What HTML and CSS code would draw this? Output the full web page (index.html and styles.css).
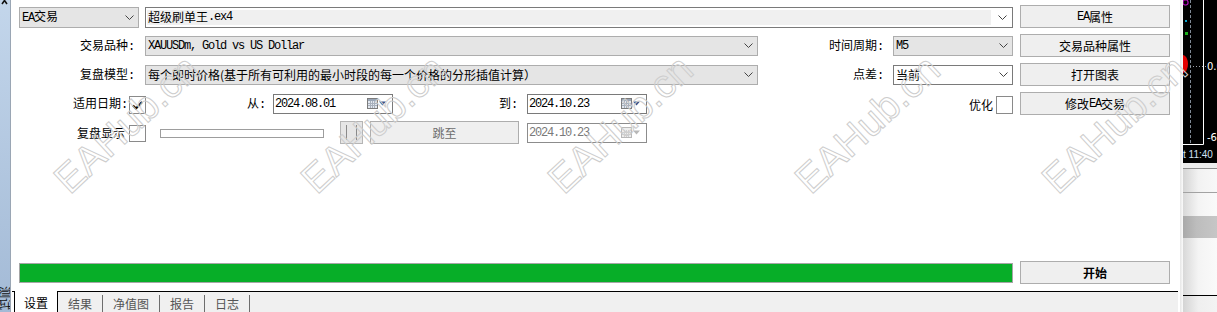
FILE: index.html
```html
<!DOCTYPE html>
<html lang="zh-CN">
<head>
<meta charset="utf-8">
<title>策略测试</title>
<link rel="stylesheet" href="styles.css">
</head>
<body>
<div class="app">
  <aside class="dock">
    <div class="dock-bar">
      <svg class="dock-x" width="10" height="5" viewBox="0 0 10 5"><path d="M2 -3 L7 4 M7 -3 L2 4" stroke="#111" stroke-width="1.6" fill="none"/></svg>
      <span class="dock-label">测试器</span>
    </div>
  </aside>

  <main class="tester">
    <section class="panel">
      <div class="row">
        <div class="combo gray ea"><span class="val"><span class="m">EA</span>交易</span><svg class="chev" width="9" height="5" viewBox="0 0 9 5"><path d="M0.5 0.5 L4.5 4.5 L8.5 0.5" fill="none" stroke="#444"/></svg></div>
        <div class="combo file"><div class="field">超级刷单王<span class="m">.ex4</span></div><svg class="chev" width="9" height="5" viewBox="0 0 9 5"><path d="M0.5 0.5 L4.5 4.5 L8.5 0.5" fill="none" stroke="#444"/></svg></div>
        <button class="btn"><span class="m">EA</span>属性</button>
      </div>

      <div class="row">
        <label class="lbl">交易品种<span class="m">:</span></label>
        <div class="combo gray wide"><span class="val m">XAUUSDm, Gold vs US Dollar</span><svg class="chev" width="9" height="5" viewBox="0 0 9 5"><path d="M0.5 0.5 L4.5 4.5 L8.5 0.5" fill="none" stroke="#444"/></svg></div>
        <label class="lbl2">时间周期<span class="m">:</span></label>
        <div class="combo gray small"><span class="val m">M5</span><svg class="chev" width="9" height="5" viewBox="0 0 9 5"><path d="M0.5 0.5 L4.5 4.5 L8.5 0.5" fill="none" stroke="#444"/></svg></div>
        <button class="btn">交易品种属性</button>
      </div>

      <div class="row">
        <label class="lbl">复盘模型<span class="m">:</span></label>
        <div class="combo gray wide"><span class="val">每个即时价格(基于所有可利用的最小时段的每一个价格的分形插值计算）</span><svg class="chev" width="9" height="5" viewBox="0 0 9 5"><path d="M0.5 0.5 L4.5 4.5 L8.5 0.5" fill="none" stroke="#444"/></svg></div>
        <label class="lbl2">点差<span class="m">:</span></label>
        <div class="combo white small"><span class="val">当前</span><svg class="chev" width="9" height="5" viewBox="0 0 9 5"><path d="M0.5 0.5 L4.5 4.5 L8.5 0.5" fill="none" stroke="#444"/></svg></div>
        <button class="btn">打开图表</button>
      </div>

      <div class="row">
        <label class="lbl date-lbl">适用日期<span class="m">:</span></label>
        <span class="check"><svg width="11" height="9" viewBox="0 0 11 9"><path d="M1 4.5 L4 7.5 L10 1" fill="none" stroke="#000" stroke-width="2"/></svg></span>
        <label class="from-lbl">从<span class="m">:</span></label>
        <div class="date"><span class="val m">2024.08.01</span><svg class="cal" width="20" height="11" viewBox="0 0 20 11"><rect x="0.5" y="0.5" width="10" height="10" fill="#e3e8ef" stroke="#7c7c7c"/><rect x="1" y="1" width="9" height="2" fill="#9aa6b6"/><path d="M3.5 3 V10 M5.5 3 V10 M7.5 3 V10 M1 5.5 H10 M1 7.5 H10" stroke="#a8b0bc"/><path d="M12 3.5 H19 L15.5 7.5 Z" fill="#33548c"/></svg></div>
        <label class="to-lbl">到<span class="m">:</span></label>
        <div class="date"><span class="val m">2024.10.23</span><svg class="cal" width="20" height="11" viewBox="0 0 20 11"><rect x="0.5" y="0.5" width="10" height="10" fill="#e3e8ef" stroke="#7c7c7c"/><rect x="1" y="1" width="9" height="2" fill="#9aa6b6"/><path d="M3.5 3 V10 M5.5 3 V10 M7.5 3 V10 M1 5.5 H10 M1 7.5 H10" stroke="#a8b0bc"/><path d="M12 3.5 H19 L15.5 7.5 Z" fill="#33548c"/></svg></div>
        <label class="opt-lbl">优化</label>
        <span class="check"></span>
        <button class="btn">修改<span class="m">EA</span>交易</button>
      </div>

      <div class="row">
        <label class="lbl show-lbl">复盘显示</label>
        <span class="check"></span>
        <div class="slider"></div>
        <button class="btn pause" disabled><svg width="13" height="15" viewBox="0 0 13 15"><path d="M1.5 0 V15 M11.5 0 V15" stroke="#8a8a8a"/></svg></button>
        <button class="btn jump" disabled>跳至</button>
        <div class="date off"><span class="val m">2024.10.23</span><svg class="cal" width="20" height="11" viewBox="0 0 20 11"><rect x="0.5" y="0.5" width="10" height="10" fill="#eeeeee" stroke="#b8b8b8"/><path d="M3.5 3 V10 M5.5 3 V10 M7.5 3 V10 M1 5.5 H10 M1 7.5 H10" stroke="#d0d0d0"/><path d="M12 3.5 H19 L15.5 7.5 Z" fill="#b8b8b8"/></svg></div>
      </div>

      <div class="row progress-row">
        <div class="progress"><div class="fill"></div></div>
        <button class="btn start">开始</button>
      </div>

      <div class="wm-layer" aria-hidden="true">
        <span class="wm">EAHub.cn</span>
        <span class="wm">EAHub.cn</span>
        <span class="wm">EAHub.cn</span>
        <span class="wm">EAHub.cn</span>
        <span class="wm">EAHub.cn</span>
      </div>
    </section>

    <nav class="tabs">
      <span class="tab on">设置</span>
      <span class="tab">结果</span>
      <span class="tab">净值图</span>
      <span class="tab">报告</span>
      <span class="tab">日志</span>
    </nav>
  </main>

  <aside class="side">
    <div class="side-edge"></div>
    <div class="side-main">
      <svg class="chart" width="34" height="163" viewBox="0 0 34 163">
        <rect width="34" height="163" fill="#000"/>
        <path d="M7.5 0 V144" stroke="#7f8a96" stroke-dasharray="3 2"/>
        <path d="M20.5 0 V144.5 H0" stroke="#fff" fill="none"/>
        <path d="M7 66.5 H23" stroke="#9aa0a8" stroke-dasharray="1 2"/>
        <rect x="0" y="0" width="5" height="5" fill="none" stroke="#c010c8" stroke-width="1.2" rx="2"/>
        <rect x="2" y="20" width="2" height="2" fill="#0aa0c8"/>
        <rect x="2" y="32" width="3" height="3" fill="#19b019"/>
        <ellipse cx="0" cy="64" rx="5" ry="9" fill="#e30000"/>
        <text x="24" y="70" class="ct">0.0</text>
        <text x="24" y="141" class="ct">-60</text>
        <text x="0" y="158" class="ct time">t 11:40</text>
      </svg>
      <div class="s-a"></div>
      <div class="s-b"></div>
      <div class="s-c"></div>
      <div class="s-d"></div>
      <div class="s-e"></div>
      <div class="s-f"></div>
    </div>
  </aside>
</div>
</body>
</html>
```

FILE: styles.css
```css
* { box-sizing: border-box; }

html, body {
  margin: 0;
  width: 1217px;
  height: 312px;
  overflow: hidden;
  background: #fff;
}

body {
  font-family: "Noto Sans CJK SC", "Liberation Sans", sans-serif;
  font-size: 12px;
  line-height: 16px;
  color: #000;
}

.m {
  font-family: "Liberation Mono", "Noto Sans CJK SC", monospace;
  font-size: 12px;
  letter-spacing: -1.2px;
}

.app {
  display: flex;
  width: 1217px;
  height: 312px;
}

/* left dock */
.dock {
  width: 12px;
  flex: none;
  background: #fff;
}
.dock-bar {
  width: 11px;
  height: 100%;
  background: linear-gradient(#c3d6eb, #a3bad6);
  border-right: 1px solid #9aa6b4;
  display: flex;
  flex-direction: column;
  justify-content: space-between;
  overflow: hidden;
}
.dock-x { display: block; }
.dock-label {
  writing-mode: vertical-rl;
  text-orientation: sideways;
  font-size: 12px;
  line-height: 10px;
  height: 26px;
  overflow: hidden;
  color: #111;
}

/* tester */
.tester {
  width: 1168px;
  flex: none;
  display: flex;
  flex-direction: column;
}

.panel {
  position: relative;
  height: 291px;
  padding: 5px 0 7px 7px;
  display: flex;
  flex-direction: column;
  gap: 6px;
}

.row {
  display: flex;
  align-items: center;
  height: 23px;
  width: 1151px;
  flex: none;
}

.progress-row { margin-top: auto; }

.btn {
  margin: 0 0 0 auto;
  width: 150px;
  height: 23px;
  padding: 0;
  background: #efefef;
  border: 1px solid #adadad;
  font: inherit;
  color: #000;
  display: flex;
  align-items: center;
  justify-content: center;
  flex: none;
}

.combo {
  display: flex;
  align-items: center;
  height: 20px;
  border: 1px solid #adadad;
  flex: none;
  padding-left: 2px;
  padding-right: 4px;
}
.combo .val {
  flex: 1;
  white-space: nowrap;
  overflow: hidden;
}
.combo.gray { background: #e5e5e5; }
.combo.white { background: #fff; border-color: #7a7a7a; }
.combo.ea { width: 120px; height: 21px; margin-top: 1px; }
.combo.wide { width: 613px; }
.combo.small { width: 120px; }
.combo.file {
  margin-left: 6px;
  width: 868px;
  height: 21px;
  margin-top: 1px;
  background: #fff;
  border-color: #7a7a7a;
  padding: 2px 5px 2px 1px;
}
.combo.file .field {
  flex: 1;
  height: 100%;
  background: #f0f0f0;
  margin-right: 7px;
  padding-left: 1px;
  display: flex;
  align-items: center;
}
.chev { flex: none; display: block; }

.lbl {
  width: 126px;
  text-align: right;
  padding-right: 11px;
  flex: none;
}
.lbl2 {
  width: 135px;
  text-align: right;
  padding-right: 10px;
  flex: none;
}
.lbl.date-lbl { width: 110px; padding-right: 2px; }
.lbl.show-lbl { width: 110px; padding-right: 4px; }

.check {
  width: 17px;
  height: 18px;
  border: 1px solid #8a8a8a;
  background: #fff;
  flex: none;
  display: flex;
  align-items: center;
  justify-content: center;
  margin-top: 3px;
}
.show-lbl + .check { height: 17px; margin-top: 2px; }

.from-lbl {
  width: 127px;
  text-align: right;
  padding-right: 8px;
  flex: none;
}
.to-lbl {
  width: 134px;
  text-align: right;
  padding-right: 10px;
  flex: none;
}

.date {
  width: 120px;
  height: 20px;
  border: 1px solid #7a7a7a;
  background: #fff;
  display: flex;
  align-items: center;
  padding: 0 5px 0 1px;
  flex: none;
}
.date .val { flex: 1; white-space: nowrap; }
.date .cal { display: block; flex: none; }
.date.off {
  margin-left: 8px;
  border-color: #8c8c8c;
  color: #7a7a7a;
}

.opt-lbl {
  margin-left: auto;
  padding-right: 3px;
  margin-top: 3px;
}
.opt-lbl + .check + .btn { margin-left: 7px; }

.slider {
  margin-left: 14px;
  width: 164px;
  height: 9px;
  border: 1px solid #9d9d9d;
  background: #fff;
  flex: none;
  margin-top: 2px;
}
.btn.pause {
  margin-left: 16px;
  width: 23px;
  background: #e6e6e6;
  border-color: #b5b5b5;
}
.btn.jump {
  margin-left: 7px;
  width: 149px;
  color: #6d6d6d;
}

.progress {
  width: 994px;
  height: 20px;
  border: 1px solid #a6a6a6;
  flex: none;
  background: #fff;
}
.progress .fill {
  width: 100%;
  height: 100%;
  background: #07ae28;
}
.btn.start { font-weight: bold; }

/* watermark */
.wm-layer {
  position: absolute;
  left: 0;
  top: 0;
  right: 0;
  bottom: 0;
  display: flex;
  gap: 67px;
  padding: 101px 0 0 24px;
  pointer-events: none;
}
.wm {
  flex: none;
  width: 180px;
  height: 46px;
  font-family: "Liberation Sans", sans-serif;
  font-size: 40px;
  line-height: 46px;
  color: transparent;
  -webkit-text-stroke: 1px #cdcdcd;
  transform: rotate(-43deg);
  white-space: nowrap;
}

/* bottom tabs */
.tabs {
  height: 21px;
  flex: none;
  border-top: 1px solid #000;
  background: linear-gradient(to right, #fff 2px, #f0f0f0 2px);
  display: flex;
  align-items: flex-end;
  padding-left: 2px;
  margin-right: 2px;
}
.tab {
  height: 17px;
  line-height: 17px;
  padding: 0 10px;
  border-right: 1px solid #6d6d6d;
  color: #555;
}
.tab.on {
  align-self: stretch;
  height: 21px;
  margin-top: -1px;
  padding: 3px 9px 0;
  background: #fff;
  border-left: 1px solid #000;
  border-right: 1px solid #000;
  color: #000;
}

/* right side */
.side {
  width: 37px;
  flex: none;
  display: flex;
}
.side-edge {
  width: 3px;
  background: linear-gradient(to right, #e6e6e6, #fbfbfb);
}
.side-main {
  width: 34px;
  display: flex;
  flex-direction: column;
}
.chart { display: block; flex: none; }
.ct {
  font-family: "DejaVu Sans", "Liberation Sans", sans-serif;
  font-size: 10px;
  fill: #fff;
}
.ct.time {
  font-family: "Liberation Sans", sans-serif;
  fill: #cfe0f4;
  font-size: 10px;
}
.s-a {
  height: 6px;
  background: #ececec;
  border-bottom: 1px solid #8c8c8c;
}
.s-b {
  height: 24px;
  background: linear-gradient(to right, #d4d4d4, #f2f2f2 45%, #f8f8f8);
  border-bottom: 1px solid #a2a2a2;
}
.s-c {
  height: 23px;
  background: linear-gradient(to right, #d8d8d8, #f4f4f4 45%, #fafafa);
}
.s-d {
  height: 22px;
  background: linear-gradient(to right, #a9a9a9, #bdbdbd 40%, #c6c6c6);
}
.s-e {
  height: 58px;
  background: linear-gradient(to right, #d8d8d8, #f4f4f4 45%, #fafafa);
  border-bottom: 1px solid #000;
}
.s-f {
  flex: 1;
  background: linear-gradient(to right, #d4d4d4, #efefef 45%, #f3f3f3);
}
```
